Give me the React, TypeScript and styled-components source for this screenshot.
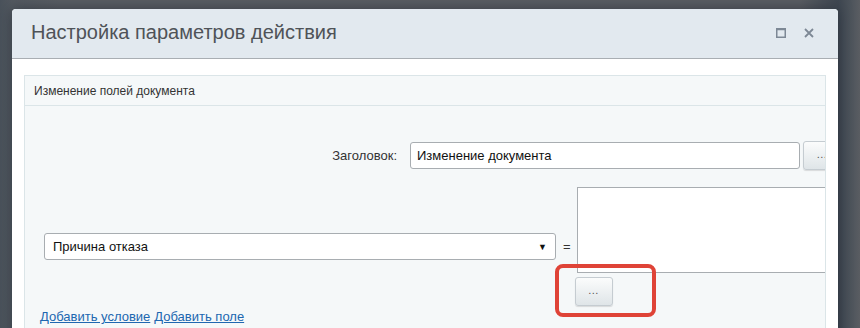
import React from "react";
import styled, { createGlobalStyle } from "styled-components";

const Global = createGlobalStyle`
  html, body { margin: 0; padding: 0; }
  body {
    font-family: "Liberation Sans", Arial, sans-serif;
    background: #5a5e63;
  }
  * { box-sizing: border-box; }
`;

const Page = styled.div`
  position: relative;
  width: 860px;
  height: 328px;
  overflow: hidden;
  padding: 9px 0 0 12px;
  background: linear-gradient(90deg, #4a525b 0px, #535960 12px, #5a5e63 60px, #5b5e63 800px, #3f4751 838px, #4c535b 850px, #5a5d62 860px);
`;

const Dialog = styled.div`
  width: 826px;
  height: 340px;
  background: #ffffff;
  border-radius: 4px 4px 0 0;
  box-shadow: 0 0 14px rgba(25, 35, 45, 0.55);
  display: flex;
  flex-direction: column;
`;

const Header = styled.div`
  height: 50px;
  flex: none;
  display: flex;
  align-items: center;
  justify-content: space-between;
  padding: 0 24px 0 19px;
  background: #e2e9ef;
  border-bottom: 1px solid #a9aeb3;
  border-radius: 4px 4px 0 0;
`;

const Title = styled.div`
  font-size: 20px;
  color: #4f5358;
  margin-top: -3px;
`;

const HeaderIcons = styled.div`
  display: flex;
  align-items: center;
  gap: 18px;
  margin-top: -1px;
`;

const IconBtn = styled.span`
  display: flex;
  width: 10px;
  height: 10px;
  align-items: center;
  justify-content: center;
`;

const Body = styled.div`
  padding: 16px 12px 0;
`;

const Panel = styled.div`
  border: 1px solid #dbe5e8;
  background: #f5f8f9;
  overflow: hidden;
  height: 300px;
`;

const PanelHeader = styled.div`
  height: 30px;
  display: flex;
  align-items: center;
  padding-left: 9px;
  font-size: 12px;
  color: #333;
  border-bottom: 1px solid #dbe5e8;
`;

const PanelBody = styled.div`
  padding-top: 35px;
  width: 900px;
`;

const TitleRow = styled.div`
  display: grid;
  grid-template-columns: 372px auto;
  column-gap: 13px;
  align-items: center;
`;

const Label = styled.div`
  text-align: right;
  font-size: 13px;
  color: #333;
`;

const InputGroup = styled.div`
  display: flex;
  gap: 3px;
  align-items: center;
`;

const TextInput = styled.div<{ $w: number }>`
  width: ${(p) => p.$w}px;
  height: 27px;
  border: 1px solid #a8adb1;
  border-radius: 3px;
  background: #fff;
  display: flex;
  align-items: center;
  padding-left: 6px;
  font-size: 13px;
  color: #111;
`;

const DotsButton = styled.div<{ $w: number }>`
  width: ${(p) => p.$w}px;
  height: 29px;
  border: 1px solid #c5ccd1;
  border-radius: 3px;
  background: linear-gradient(#fbfcfc, #dfe5e8);
  box-shadow: 0 1px 1px rgba(0, 0, 0, 0.12);
  display: flex;
  align-items: center;
  justify-content: center;
  font-size: 11px;
  color: #555;
  letter-spacing: 0.5px;
  padding-bottom: 3px;
`;

const FieldRow = styled.div`
  display: flex;
  align-items: center;
  margin-top: 17px;
  padding-left: 19px;
`;

const Select = styled.div`
  width: 512px;
  height: 27px;
  border: 1px solid #a8adb1;
  border-radius: 3px;
  background: #fff;
  display: flex;
  align-items: center;
  justify-content: space-between;
  padding: 0 8px 0 8px;
  font-size: 13px;
  color: #111;
`;

const Arrow = styled.span`
  font-size: 9px;
  color: #111;
`;

const Equals = styled.span`
  font-size: 13px;
  color: #333;
  margin: 0 4px 0 7px;
`;

const ValueCell = styled.div`
  display: flex;
  flex-direction: column;
  gap: 4px;
`;

const TextArea = styled.div`
  width: 320px;
  height: 86px;
  margin-left: 2px;
  border: 1px solid #a8adb1;
  background: #fff;
`;

const Links = styled.div`
  padding: 3px 0 0 15px;
  font-size: 13px;
  display: flex;
  gap: 4px;
`;

const Link = styled.a`
  color: #2067b0;
  text-decoration: underline;
`;

const Annotation = styled.div`
  position: absolute;
  left: 555px;
  top: 264px;
  width: 101px;
  height: 53px;
  border: 4px solid #df4337;
  border-radius: 8px;
`;

export default function App() {
  return (
    <>
      <Global />
      <Page>
        <Dialog>
          <Header>
            <Title>Настройка параметров действия</Title>
            <HeaderIcons>
              <IconBtn>
                <svg width="10" height="10" viewBox="0 0 10 10">
                  <rect x="0.75" y="0.75" width="8.5" height="8.5" fill="none" stroke="#7d8895" strokeWidth="1.5" />
                  <line x1="0.75" y1="1.5" x2="9.25" y2="1.5" stroke="#7d8895" strokeWidth="1.5" />
                </svg>
              </IconBtn>
              <IconBtn>
                <svg width="10" height="10" viewBox="0 0 10 10">
                  <path d="M1 1 L9 9 M9 1 L1 9" stroke="#7d8895" strokeWidth="1.8" />
                </svg>
              </IconBtn>
            </HeaderIcons>
          </Header>
          <Body>
            <Panel>
              <PanelHeader>Изменение полей документа</PanelHeader>
              <PanelBody>
                <TitleRow>
                  <Label>Заголовок:</Label>
                  <InputGroup>
                    <TextInput $w={390}>Изменение документа</TextInput>
                    <DotsButton $w={38}>...</DotsButton>
                  </InputGroup>
                </TitleRow>
                <FieldRow>
                  <Select>
                    <span>Причина отказа</span>
                    <Arrow>▼</Arrow>
                  </Select>
                  <Equals>=</Equals>
                  <ValueCell>
                    <TextArea />
                    <DotsButton $w={38}>...</DotsButton>
                  </ValueCell>
                </FieldRow>
                <Links>
                  <Link href="#">Добавить условие</Link>
                  <Link href="#">Добавить поле</Link>
                </Links>
              </PanelBody>
            </Panel>
          </Body>
        </Dialog>
        <Annotation />
      </Page>
    </>
  );
}
